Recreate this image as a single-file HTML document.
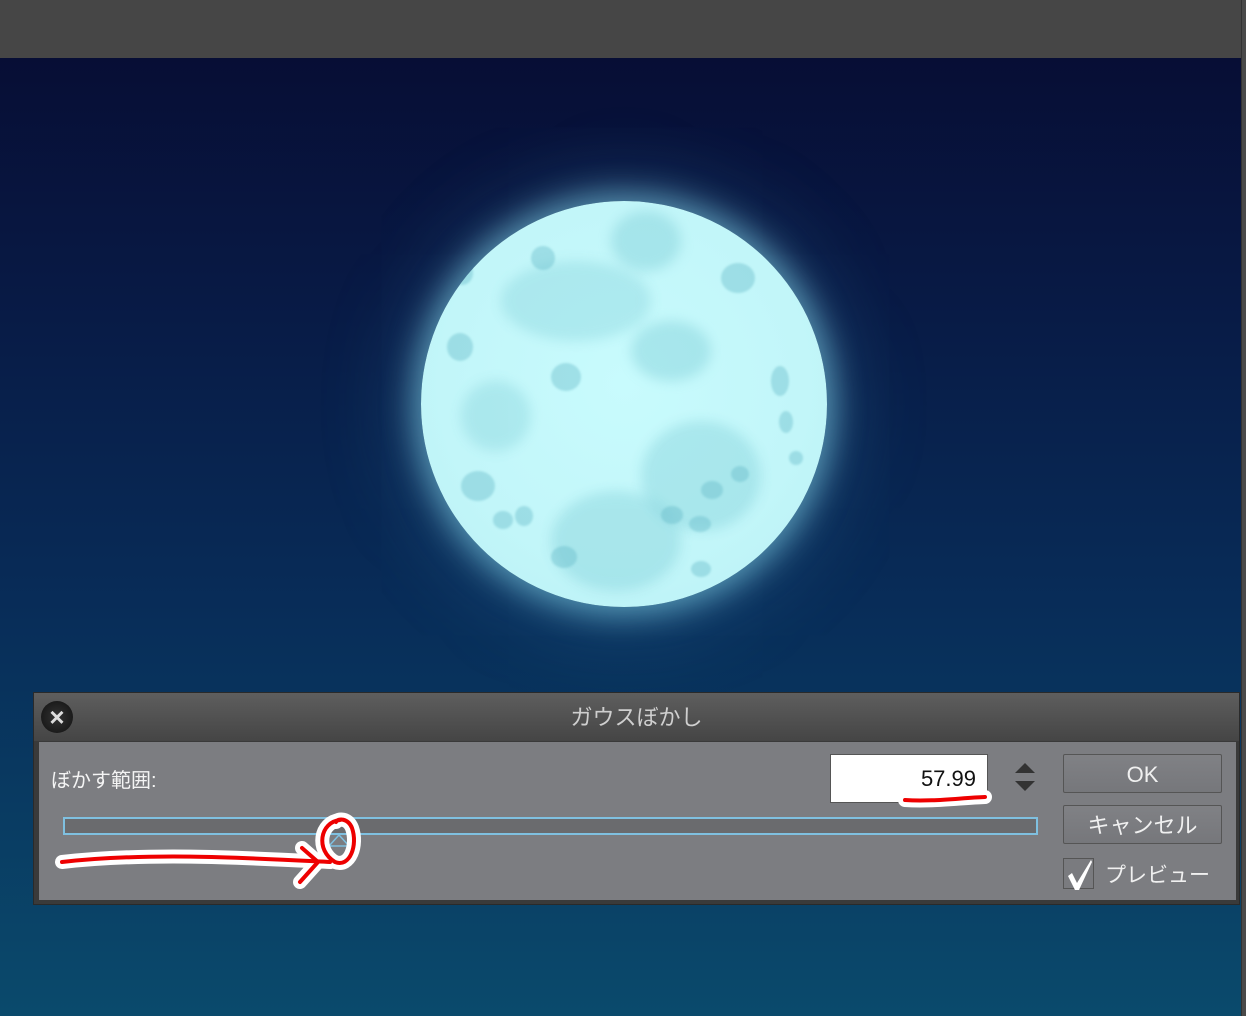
<!DOCTYPE html>
<html><head><meta charset="utf-8"><style>
*{margin:0;padding:0;box-sizing:border-box}
body{width:1246px;height:1016px;overflow:hidden;position:relative;background:linear-gradient(#070e35 58px,#081a45 300px,#082c58 600px,#0a4a6c 1016px);font-family:"Liberation Sans","Noto Sans CJK JP",sans-serif}
.top{position:absolute;left:0;top:0;width:1246px;height:58px;background:#464646}
.rs{position:absolute;left:1241px;top:0;width:5px;height:1016px;background:#4a4a4a;border-left:1px solid #333}
.moon{position:absolute;left:421px;top:201px;width:406px;height:406px;border-radius:50%;overflow:hidden;background:radial-gradient(circle at 50% 45%,#c8fbfd 0%,#c2f6f9 60%,#b8f0f5 100%);box-shadow:0 0 30px 8px rgba(140,220,240,.55),0 0 80px 20px rgba(80,170,210,.25)}
.spot{position:absolute;border-radius:50%;background:rgba(110,195,205,.35);filter:blur(6px)}
.s{position:absolute;border-radius:50%;background:rgba(100,185,200,.4);filter:blur(1px)}
.dlg{position:absolute;left:33px;top:692px;width:1207px;height:213px;background:#3a3a3a;border:1px solid #2a2a2a}
.title{position:absolute;left:0;top:0;width:100%;height:48px;background:linear-gradient(#5e5e5e,#454545);color:#cfcfcf;font-size:22px;text-align:center;line-height:50px}
.body{position:absolute;left:5px;top:49px;width:1197px;height:158px;background:#7c7d81}
.x{position:absolute;left:7px;top:8px;width:32px;height:32px;border-radius:50%;background:radial-gradient(#333,#111);color:#ddd;font-size:26px;font-weight:bold;text-align:center;line-height:32px}
.lbl{position:absolute;left:12px;top:22px;color:#f4f4f4;font-size:20px}
.inp{position:absolute;left:791px;top:12px;width:158px;height:49px;background:#fff;border:1px solid #555;font-size:22px;text-align:right;padding-right:11px;line-height:47px;color:#111}
.slider{position:absolute;left:24px;top:75px;width:975px;height:18px;background:#6a6b6e;border:2px solid #7fc0e0}
.btn{position:absolute;left:1024px;width:159px;border:1px solid #555;border-radius:2px;background:linear-gradient(#808185,#76777b);color:#f0f0f0;font-size:22px;text-align:center}
.chk{position:absolute;left:1024px;top:116px;width:31px;height:31px;border:1px solid #555;background:#7a7b7f}
.pv{position:absolute;left:1066px;top:117px;color:#f0f0f0;font-size:21px}
</style></head><body>
<div class="top"></div>
<div class="moon">
<div class="spot" style="left:190px;top:10px;width:70px;height:60px"></div>
<div class="spot" style="left:80px;top:60px;width:150px;height:80px;opacity:.8"></div>
<div class="spot" style="left:210px;top:120px;width:80px;height:60px"></div>
<div class="spot" style="left:40px;top:180px;width:70px;height:70px;opacity:.8"></div>
<div class="spot" style="left:220px;top:220px;width:120px;height:110px;opacity:.9"></div>
<div class="spot" style="left:130px;top:290px;width:130px;height:100px;opacity:.9"></div>
<div class="s" style="left:300px;top:62px;width:34px;height:30px"></div>
<div class="s" style="left:26px;top:132px;width:26px;height:28px"></div>
<div class="s" style="left:350px;top:165px;width:18px;height:30px"></div>
<div class="s" style="left:358px;top:210px;width:14px;height:22px"></div>
<div class="s" style="left:130px;top:162px;width:30px;height:28px"></div>
<div class="s" style="left:40px;top:270px;width:34px;height:30px"></div>
<div class="s" style="left:72px;top:310px;width:20px;height:18px"></div>
<div class="s" style="left:94px;top:305px;width:18px;height:20px"></div>
<div class="s" style="left:130px;top:345px;width:26px;height:22px"></div>
<div class="s" style="left:240px;top:305px;width:22px;height:18px"></div>
<div class="s" style="left:268px;top:315px;width:22px;height:16px"></div>
<div class="s" style="left:280px;top:280px;width:22px;height:18px"></div>
<div class="s" style="left:310px;top:265px;width:18px;height:16px"></div>
<div class="s" style="left:270px;top:360px;width:20px;height:16px"></div>
<div class="s" style="left:368px;top:250px;width:14px;height:14px"></div>
<div class="s" style="left:110px;top:45px;width:24px;height:24px"></div>
<div class="s" style="left:30px;top:60px;width:22px;height:24px"></div>
</div>
<div class="rs"></div>
<div class="dlg">
<div class="title">ガウスぼかし</div>
<div class="x">×</div>
<div class="body">
<div class="lbl">ぼかす範囲:</div>
<div class="inp">57.99</div>
<svg style="position:absolute;left:974px;top:19px" width="24" height="32"><polygon points="12,2 22,12 2,12" fill="#333"/><polygon points="12,30 22,20 2,20" fill="#333"/></svg>
<div class="slider"></div>
<svg style="position:absolute;left:288px;top:92px" width="24" height="14"><polygon points="12,1 22,12 2,12" fill="none" stroke="#7fc0e0" stroke-width="1.5"/></svg>
<div class="btn" style="top:12px;height:39px;line-height:39px">OK</div>
<div class="btn" style="top:63px;height:39px;line-height:39px">キャンセル</div>
<div class="chk"><svg width="31" height="31"><path d="M4 17 L8 14 L13 24 L27 1 L28 3 L15 31 L11 31 Z" fill="#fff"/></svg></div>
<div class="pv">プレビュー</div>
</div>
</div>
<svg style="position:absolute;left:0;top:0" width="1246" height="1016">
<g fill="none" stroke-linecap="round" stroke-linejoin="round">
<g stroke="#fff" stroke-width="14">
<path d="M62 862 C150 852,250 858,330 862"/><path d="M302 848 L318 862 L300 882"/>
<path d="M340 820 C320 822,315 850,335 862 C350 868,358 845,352 828 C348 818,338 818,336 822"/>
<path d="M905 800 C930 802,960 798,985 797"/>
</g>
<g stroke="#e00" stroke-width="4">
<path d="M62 862 C150 852,250 858,330 862"/><path d="M302 848 L318 862 L300 882"/>
<path d="M340 820 C320 822,315 850,335 862 C350 868,358 845,352 828 C348 818,338 818,336 822"/>
<path d="M905 800 C930 802,960 798,985 797"/>
</g></g></svg>
</body></html>
